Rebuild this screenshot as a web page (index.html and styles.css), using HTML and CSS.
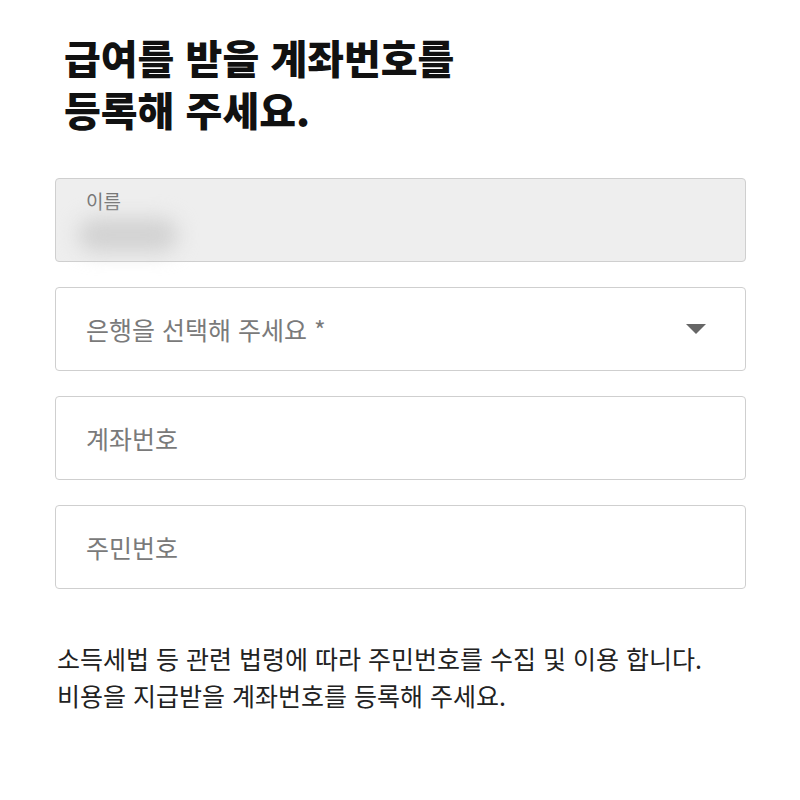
FILE: index.html
```html
<!DOCTYPE html>
<html lang="ko">
    <head>
        <meta charset="UTF-8">
        <title>계좌 등록</title>
        <link rel="stylesheet" href="styles.css">
    </head>
    <body>
        <div class="page">
            <h1 class="title">급여를 받을 계좌번호를<br>등록해 주세요.</h1>

            <div class="fields">
                <!-- 이름은 수정 불가 -->
                <div class="field readonly">
                    <span class="field-label">이름</span>
                    <span class="field-value"></span>
                </div>

                <div class="field select">
                    <span class="placeholder">은행을 선택해 주세요 *</span>
                    <svg class="arrow" width="20" height="11" viewBox="0 0 20 11">
                        <path d="M0 0 L20 0 L10 10 Z" fill="#666"/>
                    </svg>
                </div>

                <div class="field">
                    <span class="placeholder">계좌번호</span>
                </div>

                <div class="field">
                    <span class="placeholder">주민번호</span>
                </div>
            </div>

            <p class="notice">
                소득세법 등 관련 법령에 따라 주민번호를 수집 및 이용 합니다.<br>
                비용을 지급받을 계좌번호를 등록해 주세요.
            </p>
        </div>
    </body>
</html>
```

FILE: styles.css
```css
body {
    margin: 0;
    background: #fff;
    font-family: "Noto Sans CJK KR", "Noto Sans", sans-serif;
    color: #222;
}

.page {
    width: 691px;
    padding: 31px 0 0 55px;
}

.title {
    margin: 0 0 43px 9px;
    font-size: 40px;
    line-height: 52px;
    font-weight: 900;
    color: #111;
}

.fields {
    display: flex;
    flex-direction: column;
    gap: 25px;
}

.field {
    box-sizing: border-box;
    height: 84px;
    border: 1px solid #cfcfcf;
    border-radius: 4px;
    background: #fff;
    padding: 0 30px;
    display: flex;
    align-items: center;
}

.field.readonly {
    background: #eeeeee;
    flex-direction: column;
    align-items: flex-start;
    justify-content: flex-start;
    padding-top: 9px;
}

.field-label {
    font-size: 19px;
    color: #777;
    line-height: 26px;
}

.field-value {
    display: block;
    width: 100px;
    height: 34px;
    margin: 4px 0 0 -8px;
    border-radius: 17px;
    background: #d2d2d2;
    filter: blur(10px);
}

.placeholder {
    font-size: 25px;
    color: #7a7a7a;
}

.field.select {
    justify-content: space-between;
    padding-right: 39px;
}

.notice {
    margin: 51px 0 0 2px;
    font-size: 25px;
    line-height: 37px;
    color: #222;
}
```
